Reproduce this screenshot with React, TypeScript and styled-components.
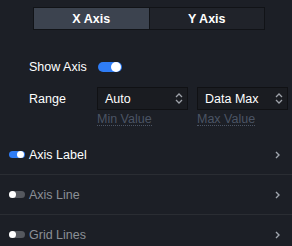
import React, { useState } from "react";
import styled, { createGlobalStyle } from "styled-components";

const GlobalStyle = createGlobalStyle`
  html, body {
    margin: 0;
    padding: 0;
    background: #1c1f26;
  }
  body {
    font-family: "Liberation Sans", Arial, sans-serif;
    color: #ffffff;
  }
`;

const Panel = styled.div`
  width: 292px;
  height: 246px;
  overflow: hidden;
  background: #1c1f26;
`;

const Tabs = styled.div`
  display: flex;
  width: 232px;
  height: 23px;
  margin: 7px 0 0 33px;
  border: 1px solid #111317;
  box-sizing: border-box;
`;

const Tab = styled.div<{ $active?: boolean }>`
  flex: 1;
  display: flex;
  align-items: center;
  justify-content: center;
  font-size: 12.5px;
  font-weight: bold;
  background: ${(p) => (p.$active ? "#3c434f" : "#20232a")};
  & + & {
    border-left: 1px solid #111317;
  }
`;

const Form = styled.div`
  padding: 27px 0 0 29px;
  display: flex;
  flex-direction: column;
`;

const Row = styled.div`
  display: flex;
  align-items: center;
  height: 20px;
`;

const Label = styled.div`
  width: 68px;
  font-size: 12.5px;
`;

const Switch = styled.div<{ $on?: boolean; $small?: boolean }>`
  position: relative;
  width: ${(p) => (p.$small ? 16 : 24)}px;
  height: ${(p) => (p.$small ? 7 : 10)}px;
  border-radius: 6px;
  background: ${(p) => (p.$on ? "#2f7df6" : "#55585e")};
  flex-shrink: 0;
  &::after {
    content: "";
    position: absolute;
    top: 0;
    ${(p) => (p.$on ? "right: 1px;" : "left: 0;")}
    width: ${(p) => (p.$small ? 7 : 10)}px;
    height: ${(p) => (p.$small ? 7 : 10)}px;
    border-radius: 50%;
    background: #ffffff;
  }
`;

const RangeRow = styled.div`
  display: flex;
  align-items: flex-start;
  margin-top: 10px;
`;

const RangeLabel = styled(Label)`
  height: 23px;
  display: flex;
  align-items: center;
`;

const Fields = styled.div`
  display: flex;
  gap: 9px;
`;

const Field = styled.div`
  display: flex;
  flex-direction: column;
  width: 91px;
`;

const Select = styled.div`
  height: 23px;
  box-sizing: border-box;
  border: 1px solid #101114;
  background: #1a1c21;
  display: flex;
  align-items: center;
  justify-content: space-between;
  padding: 0 4px 0 7px;
  font-size: 12.5px;
`;

const Hint = styled.span`
  align-self: flex-start;
  margin-top: 3px;
  font-size: 12.5px;
  color: #4b5464;
  border-bottom: 1px dotted #4b5464;
  line-height: 12px;
`;

const Sections = styled.div`
  margin-top: 9px;
`;

const Section = styled.div<{ $on?: boolean }>`
  display: flex;
  align-items: center;
  height: 39px;
  padding: 0 12px 0 9px;
  gap: 4px;
  font-size: 12.5px;
  color: ${(p) => (p.$on ? "#ffffff" : "#8b8f96")};
  & + & {
    border-top: 1px solid #2a2d33;
  }
`;

const SectionTitle = styled.div`
  flex: 1;
`;

const UpDown = () => (
  <svg width="8" height="11" viewBox="0 0 8 11" fill="none">
    <path d="M1 4 L4 1 L7 4" stroke="#9ea2a9" strokeWidth="1.3" />
    <path d="M1 7 L4 10 L7 7" stroke="#9ea2a9" strokeWidth="1.3" />
  </svg>
);

const Chevron = () => (
  <svg width="5" height="8" viewBox="0 0 5 8" fill="none">
    <path d="M1 1 L4 4 L1 7" stroke="#a0a6ae" strokeWidth="1.4" />
  </svg>
);

export default function App() {
  const [tab, setTab] = useState(0);
  const sections = [
    { title: "Axis Label", on: true },
    { title: "Axis Line", on: false },
    { title: "Grid Lines", on: false },
  ];

  return (
    <Panel>
      <GlobalStyle />
      <Tabs>
        <Tab $active={tab === 0} onClick={() => setTab(0)}>
          X Axis
        </Tab>
        <Tab $active={tab === 1} onClick={() => setTab(1)}>
          Y Axis
        </Tab>
      </Tabs>
      <Form>
        <Row>
          <Label>Show Axis</Label>
          <Switch $on style={{ marginLeft: 1 }} />
        </Row>
        <RangeRow>
          <RangeLabel>Range</RangeLabel>
          <Fields>
            <Field>
              <Select>
                Auto
                <UpDown />
              </Select>
              <Hint>Min Value</Hint>
            </Field>
            <Field>
              <Select>
                Data Max
                <UpDown />
              </Select>
              <Hint>Max Value</Hint>
            </Field>
          </Fields>
        </RangeRow>
      </Form>
      <Sections>
        {sections.map((s) => (
          <Section key={s.title} $on={s.on}>
            <Switch $small $on={s.on} />
            <SectionTitle>{s.title}</SectionTitle>
            <Chevron />
          </Section>
        ))}
      </Sections>
    </Panel>
  );
}
